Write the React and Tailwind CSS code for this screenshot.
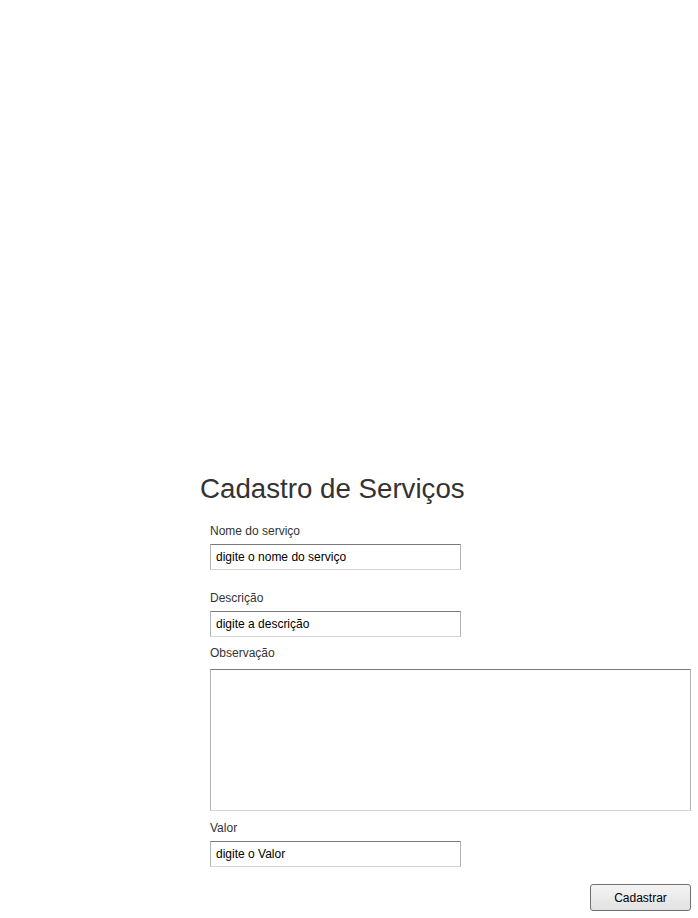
import React from 'react';

const inputCls =
  'block h-[26px] w-[251px] border border-t-[#7a7a7a] border-x-[#b4b4b4] border-b-[#d4d4d4] bg-white px-[5px] text-[12px] text-black outline-none';

function Field({ label, placeholder, className = '' }) {
  return (
    <div className={className}>
      <label className="block text-[12px] leading-[14px] text-[#333]">{label}</label>
      <input type="text" defaultValue={placeholder} className={`mt-[6px] ${inputCls}`} />
    </div>
  );
}

export default function App() {
  return (
    <div
      className="min-h-[918px] w-full bg-white pt-[472px]"
      style={{ fontFamily: '"Liberation Sans", Arial, sans-serif' }}
    >
      <div className="pl-[200px]">
        {/* título */}
        <h1 className="text-[27.7px] leading-[34px] text-[#333]">Cadastro de Serviços</h1>

        <form className="pl-[10px] pr-[7px] pt-[18px]">
          <Field label="Nome do serviço" placeholder="digite o nome do serviço" />
          <Field label="Descrição" placeholder="digite a descrição" className="mt-[21px]" />

          <div className="mt-[9px]">
            <label className="block text-[12px] leading-[14px] text-[#333]">Observação</label>
            <textarea className="mt-[9px] block h-[142px] w-full resize-none border border-t-[#7a7a7a] border-x-[#b4b4b4] border-b-[#d4d4d4] bg-white outline-none" />
          </div>

          <Field label="Valor" placeholder="digite o Valor" className="mt-[10px]" />

          <div className="mt-[17px] flex justify-end">
            <button
              type="button"
              className="h-[27px] w-[101px] rounded-[3px] border border-[#707070] bg-gradient-to-b from-[#f4f4f4] to-[#e2e2e2] text-[12px] text-black"
            >
              Cadastrar
            </button>
          </div>
        </form>
      </div>
    </div>
  );
}
